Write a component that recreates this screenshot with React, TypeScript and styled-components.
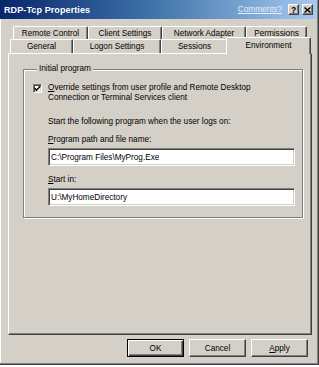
import React from 'react';
import styled, { createGlobalStyle, css } from 'styled-components';

const GlobalStyle = createGlobalStyle`
  html, body {
    margin: 0;
    padding: 0;
    background: #ffffff;
  }
  body {
    font-family: 'Liberation Sans', Arial, sans-serif;
    font-size: 8.2px;
    color: #000;
  }
`;

const bevelOut = css`
  border-top: 1px solid #ffffff;
  border-left: 1px solid #ffffff;
  border-right: 1px solid #404040;
  border-bottom: 1px solid #404040;
  box-shadow: inset -1px -1px 0 #808080;
`;

const bevelIn = css`
  border-top: 1px solid #808080;
  border-left: 1px solid #808080;
  border-right: 1px solid #ffffff;
  border-bottom: 1px solid #ffffff;
  box-shadow: inset 1px 1px 0 #404040, inset -1px -1px 0 #d4d0c8;
`;

const Window = styled.div`
  width: 319px;
  height: 365px;
  box-sizing: border-box;
  background: #d4d0c8;
  border-right: 1px solid #404040;
  border-bottom: 1px solid #404040;
  box-shadow: inset -1px -1px 0 #808080, inset 1px 0 0 #ffffff;
  padding: 0 1px 1px 0;
  display: flex;
  flex-direction: column;
`;

const TitleBar = styled.div`
  height: 19px;
  display: flex;
  align-items: center;
  padding: 0 4px 0 4px;
  background: linear-gradient(to right, #0a246a 0%, #3a6ea5 45%, #a6caf0 100%);
  color: #ffffff;
`;

const TitleText = styled.span`
  flex: 1;
  font-weight: bold;
  font-size: 9px;
  letter-spacing: 0.1px;
`;

const CommentsLink = styled.span`
  color: #e6efff;
  text-decoration: underline;
  margin-right: 3px;
`;

const CaptionButton = styled.div`
  width: 11px;
  height: 11px;
  box-sizing: border-box;
  background: #d4d0c8;
  ${bevelOut};
  display: flex;
  align-items: center;
  justify-content: center;
  color: #000;
  font-weight: bold;
  font-size: 8.5px;
  margin-left: 3px;
`;

const Body = styled.div`
  padding: 7px 0 0 8px;
  display: flex;
  flex-direction: column;
`;

const TabStrip = styled.div`
  display: flex;
  flex-direction: column;
`;

const TabRow = styled.div<{ $offset: number; $height: number }>`
  display: flex;
  padding-left: ${(p) => p.$offset}px;
  height: ${(p) => p.$height}px;
`;

const Tab = styled.div<{ $width: number; $selected?: boolean }>`
  width: ${(p) => p.$width}px;
  height: 100%;
  box-sizing: border-box;
  background: #d4d0c8;
  border-top: 1px solid #ffffff;
  border-left: 1px solid #ffffff;
  border-right: 1px solid #404040;
  box-shadow: inset -1px 0 0 #808080;
  border-radius: 2px 2px 0 0;
  display: flex;
  align-items: center;
  justify-content: center;
  white-space: nowrap;
  ${(p) =>
    p.$selected &&
    css`
      position: relative;
      z-index: 1;
      width: ${p.$width + 4}px;
      height: calc(100% + 3px);
      margin: -2px -2px -1px -2px;
      padding-bottom: 2px;
    `}
`;

const Panel = styled.div`
  width: 304px;
  height: 282px;
  box-sizing: border-box;
  ${bevelOut};
  padding: 10px 8px 0 14px;
`;

const GroupBox = styled.fieldset`
  width: 280px;
  box-sizing: border-box;
  margin: 0;
  padding: 9px 6px 11px 9px;
  border: 1px solid #808080;
  box-shadow: inset 1px 1px 0 #ffffff, 1px 1px 0 #ffffff;
  min-width: 0;
`;

const GroupLegend = styled.legend`
  margin-left: 4px;
  padding: 0 2px;
  line-height: 10px;
  background: #d4d0c8;
`;

const CheckRow = styled.div`
  display: flex;
  align-items: flex-start;
  gap: 6px;
`;

const CheckBox = styled.div`
  width: 9px;
  height: 9px;
  flex: none;
  box-sizing: border-box;
  background: #ffffff;
  ${bevelIn};
  margin-top: 1px;
  display: flex;
  align-items: center;
  justify-content: center;
`;

const CheckText = styled.div`
  line-height: 10px;
`;

const Indent = styled.div`
  padding-left: 15px;
  display: flex;
  flex-direction: column;
`;

const Line = styled.div<{ $mt: number }>`
  margin-top: ${(p) => p.$mt}px;
  line-height: 10px;
`;

const TextField = styled.input<{ $mt: number }>`
  margin: ${(p) => p.$mt}px 0 0 0;
  width: 247px;
  height: 18px;
  box-sizing: border-box;
  background: #ffffff;
  ${bevelIn};
  padding: 0 0 0 2px;
  font-family: 'Liberation Sans', Arial, sans-serif;
  font-size: 8.2px;
  color: #000;
  outline: none;
`;

const ButtonRow = styled.div`
  width: 304px;
  box-sizing: border-box;
  margin-top: 4px;
  padding-right: 4px;
  display: flex;
  justify-content: flex-end;
  gap: 5px;
`;

const DialogButton = styled.div<{ $default?: boolean }>`
  width: 57px;
  height: 18px;
  box-sizing: border-box;
  background: #d4d0c8;
  display: flex;
  align-items: center;
  justify-content: center;
  ${(p) =>
    p.$default
      ? css`
          border: 1px solid #000;
          box-shadow: inset 1px 1px 0 #ffffff, inset -1px -1px 0 #404040, inset -2px -2px 0 #808080;
        `
      : bevelOut};
`;

const tabsBack = [
  { label: 'Remote Control', width: 75 },
  { label: 'Client Settings', width: 74 },
  { label: 'Network Adapter', width: 84 },
  { label: 'Permissions', width: 61 },
];

const tabsFront = [
  { label: 'General', width: 63 },
  { label: 'Logon Settings', width: 88 },
  { label: 'Sessions', width: 67 },
  { label: 'Environment', width: 81, selected: true },
];

const App: React.FC = () => {
  return (
    <>
      <GlobalStyle />
      <Window>
        <TitleBar>
          <TitleText>RDP-Tcp Properties</TitleText>
          <CommentsLink>Comments?</CommentsLink>
          <CaptionButton>?</CaptionButton>
          <CaptionButton>
            <svg width="7" height="6" viewBox="0 0 7 6">
              <path d="M0.5 0.5 L6.5 5.5 M6.5 0.5 L0.5 5.5" stroke="#000" strokeWidth="1.4" />
            </svg>
          </CaptionButton>
        </TitleBar>

        <Body>
          <TabStrip>
            <TabRow $offset={5} $height={13}>
              {tabsBack.map((t) => (
                <Tab key={t.label} $width={t.width}>
                  {t.label}
                </Tab>
              ))}
            </TabRow>
            <TabRow $offset={2} $height={14}>
              {tabsFront.map((t) => (
                <Tab key={t.label} $width={t.width} $selected={t.selected}>
                  {t.label}
                </Tab>
              ))}
            </TabRow>
          </TabStrip>

          <Panel>
            <GroupBox>
              <GroupLegend>Initial program</GroupLegend>
              <CheckRow>
                <CheckBox>
                  <svg width="7" height="7" viewBox="0 0 7 7">
                    <path d="M0.8 3.2 L2.6 5.2 L6.2 1.2" stroke="#000" strokeWidth="1.5" fill="none" />
                  </svg>
                </CheckBox>
                <CheckText>
                  <u>O</u>verride settings from user profile and Remote Desktop
                  <br />
                  Connection or Terminal Services client
                </CheckText>
              </CheckRow>
              <Indent>
                <Line $mt={14}>Start the following program when the user logs on:</Line>
                <Line $mt={8}>
                  <u>P</u>rogram path and file name:
                </Line>
                <TextField $mt={3} readOnly defaultValue="C:\Program Files\MyProg.Exe" />
                <Line $mt={9}>
                  <u>S</u>tart in:
                </Line>
                <TextField $mt={3} readOnly defaultValue="U:\MyHomeDirectory" />
              </Indent>
            </GroupBox>
          </Panel>

          <ButtonRow>
            <DialogButton $default>OK</DialogButton>
            <DialogButton>Cancel</DialogButton>
            <DialogButton>
              <span>
                <u>A</u>pply
              </span>
            </DialogButton>
          </ButtonRow>
        </Body>
      </Window>
    </>
  );
};

export default App;
